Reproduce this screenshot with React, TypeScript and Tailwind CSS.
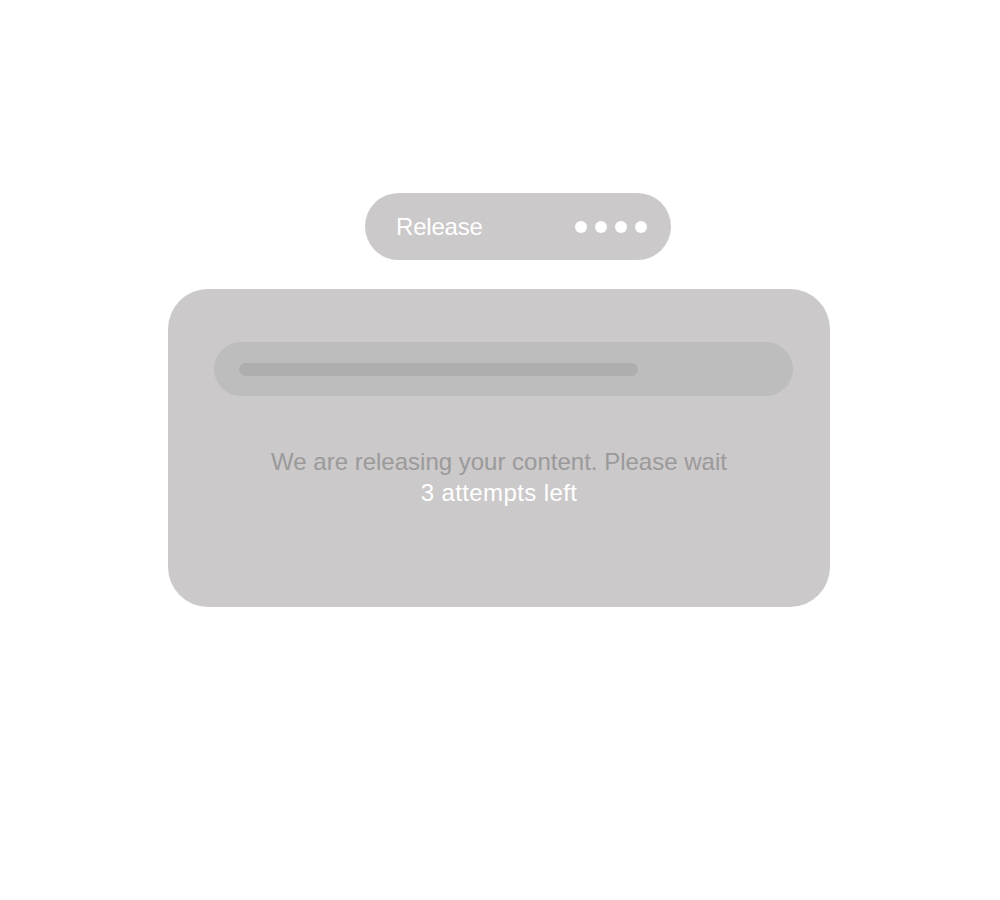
export default function App() {
  return (
    <div className="min-h-[900px] w-[1000px] bg-white" style={{ fontFamily: '"Liberation Sans", Arial, sans-serif' }}>
      <div className="pt-[193px] pl-[168px]">
        <div className="ml-[197px] flex h-[67px] w-[306px] items-center justify-between rounded-full bg-[#cbc9ca] pl-[31px] pr-[24px]">
          <span className="text-[24px] leading-none tracking-[-0.2px] text-white">Release</span>
          <div className="flex items-center gap-[8px]">
            <span className="h-[12px] w-[12px] rounded-full bg-white" />
            <span className="h-[12px] w-[12px] rounded-full bg-white" />
            <span className="h-[12px] w-[12px] rounded-full bg-white" />
            <span className="h-[12px] w-[12px] rounded-full bg-white" />
          </div>
        </div>
        <div className="mt-[29px] h-[318px] w-[662px] rounded-[40px] bg-[#cbc9ca] pt-[53px]">
          <div className="ml-[46px] flex h-[54px] w-[579px] items-center rounded-full bg-[#bdbdbd] pl-[25px]">
            <div className="h-[13px] w-[399px] rounded-full bg-[#aeaeae]" />
          </div>
          <div className="mt-[50px] text-center text-[24px] leading-[31px]">
            <div className="text-[#9b9a9a]">We are releasing your content. Please wait</div>
            <div className="tracking-[0.4px] text-white">3 attempts left</div>
          </div>
        </div>
      </div>
    </div>
  );
}
